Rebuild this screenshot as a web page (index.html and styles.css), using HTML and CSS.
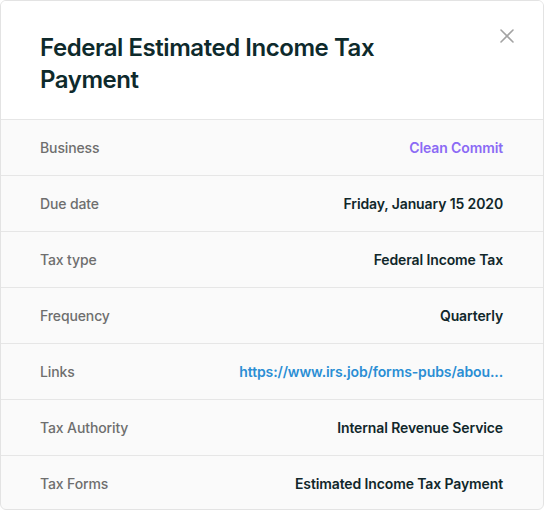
FILE: index.html
```html
<!DOCTYPE html>
<html>
<head>
<meta charset="utf-8">
<link rel="stylesheet" href="styles.css">
</head>
<body>
<div class="card">
  <div class="header">
    <h1 class="title">Federal Estimated Income Tax Payment</h1>
    <button class="close" aria-label="Close">
      <svg width="14" height="14" viewBox="0 0 14 14"><path d="M1 1L13 13M13 1L1 13" stroke="#a3a3a3" stroke-width="1.6" stroke-linecap="round" fill="none"/></svg>
    </button>
  </div>
  <div class="row"><span class="label">Business</span><span class="value purple">Clean Commit</span></div>
  <div class="row"><span class="label">Due date</span><span class="value">Friday, January 15 2020</span></div>
  <div class="row"><span class="label">Tax type</span><span class="value">Federal Income Tax</span></div>
  <div class="row"><span class="label">Frequency</span><span class="value">Quarterly</span></div>
  <div class="row"><span class="label">Links</span><span class="value link">https://www.irs.job/forms-pubs/abou...</span></div>
  <div class="row"><span class="label">Tax Authority</span><span class="value">Internal Revenue Service</span></div>
  <div class="row"><span class="label">Tax Forms</span><span class="value">Estimated Income Tax Payment</span></div>
</div>
</body>
</html>
```
FILE: styles.css
```css
html, body {
  margin: 0;
  padding: 0;
  background: #ffffff;
}
body {
  font-family: Inter, "Liberation Sans", sans-serif;
}
.card {
  box-sizing: border-box;
  width: 544px;
  height: 510px;
  border: 1px solid #e3e3e3;
  border-radius: 6px;
  overflow: hidden;
  background: #fafafa;
  display: flex;
  flex-direction: column;
}
.header {
  position: relative;
  background: #ffffff;
  padding: 31px 40px 23px 39px;
  flex: none;
}
.title {
  margin: 0;
  font-size: 24px;
  line-height: 32px;
  font-weight: 600;
  color: #0e2a2c;
  letter-spacing: -0.45px;
  max-width: 380px;
}
.close {
  position: absolute;
  top: 28px;
  right: 29px;
  width: 14px;
  height: 14px;
  padding: 0;
  border: 0;
  background: none;
  display: flex;
}
.row {
  flex: none;
  height: 55px;
  border-top: 1px solid #e6e6e6;
  display: flex;
  align-items: center;
  justify-content: space-between;
  padding: 0 40px 0 39px;
  font-size: 14px;
  line-height: 20px;
  letter-spacing: -0.12px;
}
.row:first-of-type {
  margin-top: 0;
}
.label {
  color: #6e6e6e;
  font-weight: 500;
}
.value {
  color: #10272a;
  font-weight: 600;
}
.purple {
  color: #8b6af5;
}
.link {
  color: #2a8ed4;
}
```
